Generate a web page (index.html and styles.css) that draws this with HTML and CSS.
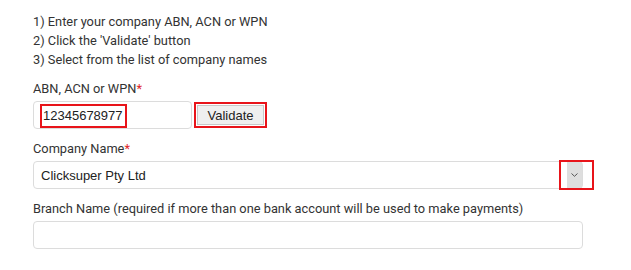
FILE: index.html
```html
<!DOCTYPE html>
<html>

<head>
  <title>Company Details</title>
  <link rel="stylesheet" href="styles.css">
</head>

<body>
  <div class="form">
    <div class="steps">
      <div>1) Enter your company ABN, ACN or WPN</div>
      <div>2) Click the 'Validate' button</div>
      <div>3) Select from the list of company names</div>
    </div>

    <div class="field">
      <label>ABN, ACN or WPN<span class="req">*</span></label>
      <div class="abn-row">
        <div class="text-input abn-input">
          <span class="mark abn-value">12345678977</span>
        </div>
        <div class="mark validate-mark">
          <button class="validate">Validate</button>
        </div>
      </div>
    </div>

    <div class="field">
      <label>Company Name<span class="req">*</span></label>
      <div class="select-row">
        <div class="text-input select-input">
          <span class="select-value">Clicksuper Pty Ltd</span>
          <span class="arrow">
            <svg width="7" height="4" viewBox="0 0 7 4"><path d="M0.5 0.5 L3.5 3.3 L6.5 0.5" fill="none" stroke="#555" stroke-width="1"/></svg>
          </span>
        </div>
        <div class="mark arrow-mark"></div>
      </div>
    </div>

    <div class="field">
      <label>Branch Name (required if more than one bank account will be used to make payments)</label>
      <div class="text-input branch-input"></div>
    </div>
  </div>
</body>

</html>
```

FILE: styles.css
```css
body {
  margin: 0;
  background-color: #fff;
  color: #333;
  font-family: Roboto, "Noto Sans", sans-serif;
  font-size: 12.8px;
}

.form {
  padding: 12px 0 0 33px;
  width: 550px;
}

.steps div {
  line-height: 19px;
}

.field {
  margin-top: 10px;
}

.field label {
  display: block;
  line-height: 19px;
  margin-bottom: 3px;
}

.req {
  color: #e0282c;
}

.mark {
  border: 2px solid #e8141a;
  box-sizing: border-box;
}

.text-input {
  border: 1px solid #dcdcdc;
  border-radius: 4px;
  box-sizing: border-box;
  height: 28px;
  background-color: #fff;
}

.abn-row {
  display: flex;
  align-items: center;
}

.abn-input {
  width: 159px;
  padding: 2px 0 0 6px;
}

.abn-value {
  display: inline-block;
  font-family: "Liberation Sans", Arial, sans-serif;
  font-size: 13px;
  color: #222;
  width: 87px;
  height: 24px;
  line-height: 20px;
  padding-left: 1px;
}

.validate-mark {
  margin-left: 2px;
  width: 73px;
  height: 26px;
  padding: 1px;
}

.validate {
  width: 100%;
  height: 100%;
  border: 1px solid #c8c8c8;
  background-color: #efefef;
  font-family: "Liberation Sans", Arial, sans-serif;
  font-size: 13px;
  color: #222;
  padding: 0;
}

.select-row {
  position: relative;
}

.select-input {
  display: flex;
  align-items: center;
  justify-content: space-between;
  width: 550px;
  padding: 0 0 0 7px;
}

.select-value {
  font-family: "Liberation Sans", Arial, sans-serif;
  font-size: 13px;
  color: #222;
}

.arrow {
  width: 15px;
  height: 26px;
  background-color: #dedede;
  display: flex;
  align-items: center;
  justify-content: center;
}

.arrow-mark {
  position: absolute;
  left: 526px;
  top: -1px;
  width: 35px;
  height: 30px;
}

.branch-input {
  width: 550px;
}
```
